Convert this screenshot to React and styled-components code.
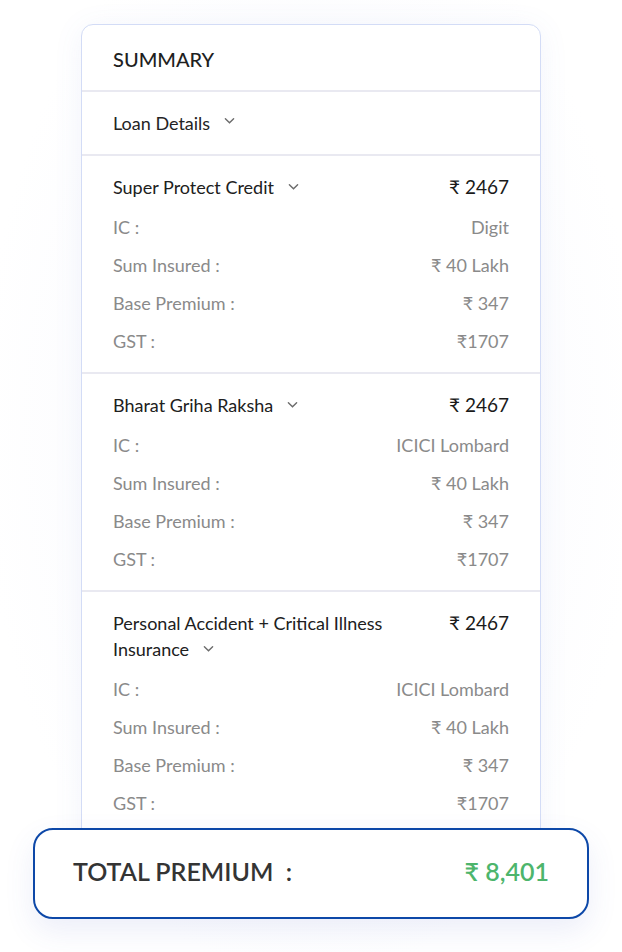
import React from 'react'
import styled, { createGlobalStyle } from 'styled-components'

const GlobalStyle = createGlobalStyle`
  body {
    margin: 0;
    background: #ffffff;
    font-family: Lato, 'Open Sans', sans-serif;
  }
`

const plans = [
  { name: 'Super Protect Credit', total: '₹ 2467', ic: 'Digit' },
  { name: 'Bharat Griha Raksha', total: '₹ 2467', ic: 'ICICI Lombard' },
  { name: 'Personal Accident + Critical Illness Insurance', total: '₹ 2467', ic: 'ICICI Lombard' }
]

function Chevron() {
  return (
    <ChevronStyled viewBox="0 0 12 8" width="11" height="8">
      <path d="M1.5 1.5 L6 6 L10.5 1.5" fill="none" stroke="#6b6b6b" strokeWidth="1.5" strokeLinecap="round" />
    </ChevronStyled>
  )
}

export default function App() {
  return (
    <>
      <GlobalStyle />
      <PageStyled>
        <CardStyled>
          <HeaderStyled>SUMMARY</HeaderStyled>
          <LoanRowStyled>
            Loan Details
            <Chevron />
          </LoanRowStyled>
          {plans.map((plan, i) => (
            <SectionStyled key={plan.name} $last={i === plans.length - 1}>
              <TitleRowStyled>
                <TitleStyled>
                  {plan.name}
                  <Chevron />
                </TitleStyled>
                <PriceStyled>{plan.total}</PriceStyled>
              </TitleRowStyled>
              <DetailRow label="IC :" value={plan.ic} />
              <DetailRow label="Sum Insured :" value="₹ 40 Lakh" />
              <DetailRow label="Base Premium :" value="₹ 347" />
              <DetailRow label="GST :" value="₹1707" />
            </SectionStyled>
          ))}
        </CardStyled>
        <TotalStyled>
          <TotalLabelStyled>TOTAL PREMIUM&nbsp;&nbsp;:</TotalLabelStyled>
          <TotalValueStyled>₹ 8,401</TotalValueStyled>
        </TotalStyled>
      </PageStyled>
    </>
  )
}

function DetailRow({ label, value }) {
  return (
    <RowStyled>
      <span>{label}</span>
      <span>{value}</span>
    </RowStyled>
  )
}

const PageStyled = styled.div`
  display: flex;
  flex-direction: column;
  align-items: center;
  padding-top: 24px;
  min-height: 952px;
  box-sizing: border-box;
  background: radial-gradient(ellipse at 50% 45%, #f6f7fd 0%, #ffffff 75%);
`
const CardStyled = styled.div`
  width: 460px;
  box-sizing: border-box;
  background: #fff;
  border: 1px solid #d3dcf6;
  border-radius: 12px;
  box-shadow: 0 4px 30px rgba(90, 110, 200, 0.08);
  padding-bottom: 24px;
`
const HeaderStyled = styled.div`
  height: 67px;
  box-sizing: border-box;
  display: flex;
  align-items: center;
  padding: 3px 31px 0;
  font-size: 20px;
  font-weight: 500;
  color: #1f1f1f;
  border-bottom: 2px solid #e9e9f1;
`
const LoanRowStyled = styled.div`
  height: 62px;
  display: flex;
  align-items: center;
  padding: 0 31px;
  font-size: 18px;
  color: #242424;
  border-bottom: 2px solid #e9e9f1;
`
const SectionStyled = styled.div`
  display: flex;
  flex-direction: column;
  gap: 16px;
  padding: 18px 31px 20px;
  border-bottom: ${p => (p.$last ? 'none' : '2px solid #e9e9f1')};
`
const TitleRowStyled = styled.div`
  display: flex;
  justify-content: space-between;
  align-items: flex-start;
  gap: 40px;
`
const TitleStyled = styled.div`
  font-size: 18px;
  line-height: 26px;
  color: #202020;
`
const PriceStyled = styled.div`
  font-size: 19px;
  line-height: 26px;
  font-weight: 400;
  color: #1a1a1a;
  white-space: nowrap;
`
const RowStyled = styled.div`
  display: flex;
  justify-content: space-between;
  font-size: 18px;
  line-height: 22px;
  color: #8a8a8a;
`
const ChevronStyled = styled.svg`
  display: inline-block;
  margin-left: 14px;
  vertical-align: middle;
  position: relative;
  top: -2px;
`
const TotalStyled = styled.div`
  position: relative;
  margin-top: -31px;
  width: 556px;
  height: 91px;
  box-sizing: border-box;
  display: flex;
  align-items: center;
  justify-content: space-between;
  padding: 0 38px 5px 38px;
  background: #fff;
  border: 2px solid #0d48a8;
  border-radius: 20px;
  box-shadow: 0 12px 30px rgba(70, 90, 200, 0.1);
`
const TotalLabelStyled = styled.div`
  font-size: 25px;
  font-weight: 600;
  color: #343434;
`
const TotalValueStyled = styled.div`
  font-size: 25px;
  font-weight: 600;
  color: #4db56c;
`
